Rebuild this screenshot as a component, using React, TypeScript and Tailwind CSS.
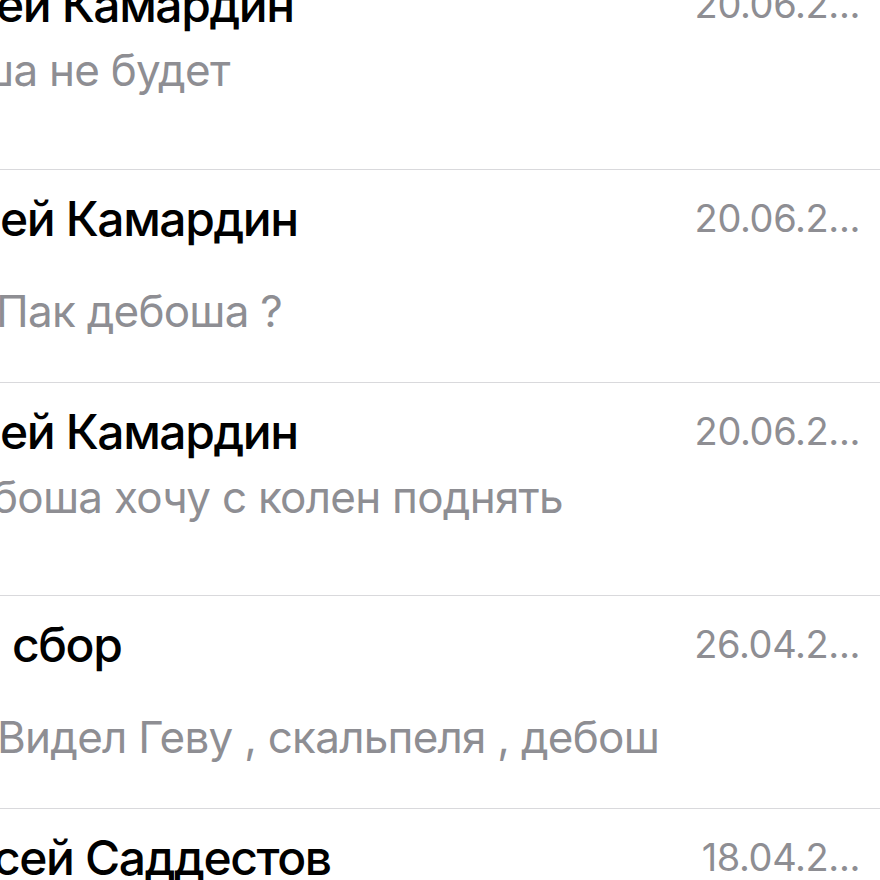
const rows = [
  { name: 'ей Камардин', date: '20.06.2...', text: 'ша не будет', gap: 'mt-[11px]', nameShift: '-ml-[4px]', textShift: '-ml-[22px]' },
  { name: 'ей Камардин', date: '20.06.2...', text: 'Пак дебоша ?', gap: 'mt-[38px]', nameShift: '', textShift: '-ml-[4px]' },
  { name: 'ей Камардин', date: '20.06.2...', text: 'боша хочу с колен поднять', gap: 'mt-[11px]', nameShift: '', textShift: '-ml-[8px]' },
  { name: 'сбор', date: '26.04.2...', text: 'Видел Геву , скальпеля , дебош', gap: 'mt-[38px]', nameShift: 'ml-[12px]', textShift: '-ml-[3px]' },
  { name: 'сей Саддестов', date: '18.04.2...', text: '', gap: 'mt-[11px]', nameShift: '-ml-[7px]', textShift: '' },
]

export default function App() {
  return (
    <div className="w-[880px] h-[880px] overflow-hidden bg-white font-['Inter',sans-serif]">
      <div className="-mt-[44px]">
        {rows.map((r, i) => (
          <div key={i} className={`h-[213px] pt-[21px] ${i > 0 ? 'border-t border-[#d9d9dc]' : ''}`}>
            <div className="flex items-start justify-between pr-[20px]">
              <div className={`${r.nameShift} text-[48px] leading-[56px] font-medium tracking-[-1.4px] text-black whitespace-nowrap`}>
                {r.name}
              </div>
              <div className="mt-[5px] text-[38px] leading-[44px] tracking-[-0.4px] text-[#8e8e93] whitespace-nowrap">{r.date}</div>
            </div>
            <div className={`${r.gap} ${r.textShift} text-[44px] leading-[52px] tracking-[-0.75px] text-[#8e8e93] whitespace-nowrap`}>
              {r.text}
            </div>
          </div>
        ))}
      </div>
    </div>
  )
}
